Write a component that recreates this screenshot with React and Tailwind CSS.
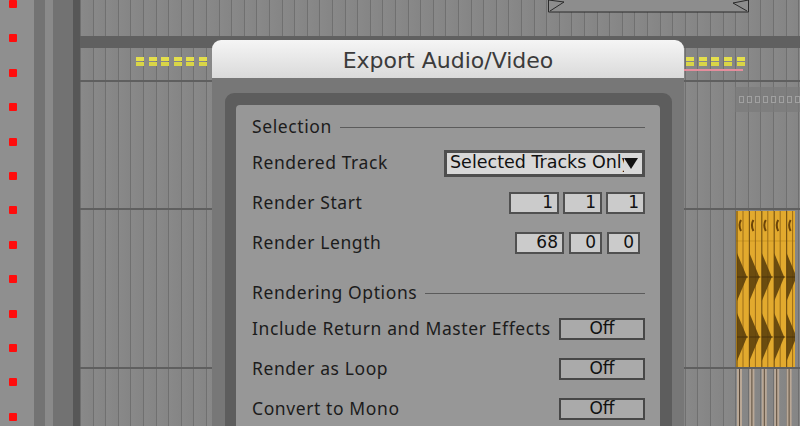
import React from 'react';

const stripes =
  'bg-[repeating-linear-gradient(90deg,#707070_0px,#707070_1px,#898989_1px,#858585_12.6px)]';

const labelFont = { fontFamily: '"Noto Sans", sans-serif' };
const boxFont = { fontFamily: '"DejaVu Sans", sans-serif' };

const RedDots = () => (
  <div className="w-[36px] h-full bg-[#8f8f8f] flex flex-col gap-[26.4px] pl-[9px]">
    {Array.from({ length: 13 }).map((_, i) => (
      <div key={i} className="w-[8px] h-[8px] shrink-0 rounded-[1px] bg-[#ff0d0d]" />
    ))}
  </div>
);

const Dash = () => (
  <div className="w-[8px] flex flex-col gap-[1px]">
    <div className="h-[4px] bg-[#e4df4c]" />
    <div className="h-[4px] bg-[#d9d547]" />
  </div>
);

const LoopBrace = () => (
  <svg width="202" height="13" viewBox="0 0 202 13" className="block">
    <rect x="0" y="0" width="201" height="12" fill="#8d8d8d" />
    <path d="M0.5 0 V12 H200.5 V0" fill="none" stroke="#2a2a2a" strokeWidth="1" />
    <path d="M0.5 0 L16 2 L2 11" fill="none" stroke="#2a2a2a" strokeWidth="1" />
    <path d="M200.5 0 L185 3 L199 11" fill="none" stroke="#2a2a2a" strokeWidth="1" />
  </svg>
);

const GoldClip = () => (
  <svg width="59" height="157" viewBox="0 0 59 157" className="block">
    <rect x="0" y="0" width="59" height="157" fill="#e2aa2e" />
    <line x1="0" y1="30" x2="59" y2="30" stroke="#c99521" strokeWidth="1" />
    {[0, 1, 2, 3, 4].map(i => {
      const x = i * 12.4;
      return (
        <g key={i}>
          <line x1={x + 1} y1="0" x2={x + 1} y2="157" stroke="#7a5512" strokeWidth="1.2" />
          <line x1={x + 7} y1="0" x2={x + 7} y2="157" stroke="#9c6d18" strokeWidth="1" />
          <path d={`M${x + 5} 9 Q${x + 2} 14 ${x + 5} 20`} fill="none" stroke="#6b4408" strokeWidth="2" />
          <path d={`M${x + 1} 42 L${x + 11} 66 L${x + 1} 90 Z`} fill="#5e410c" opacity="0.9" />
          <path d={`M${x + 1} 102 L${x + 11} 126 L${x + 1} 150 Z`} fill="#5e410c" opacity="0.9" />
          <line x1={x + 1} y1="66" x2={x + 12} y2="66" stroke="#4a320a" strokeWidth="1" />
          <line x1={x + 1} y1="126" x2={x + 12} y2="126" stroke="#4a320a" strokeWidth="1" />
        </g>
      );
    })}
  </svg>
);

const BeigeLines = () => (
  <svg width="59" height="57" viewBox="0 0 59 57" className="block">
    {[0, 1, 2, 3, 4].map(i => {
      const x = i * 12.4;
      return (
        <g key={i}>
          <rect x={x + 1} y="0" width="5" height="57" fill="#b9a897" />
          <line x1={x + 3.5} y1="0" x2={x + 3.5} y2="57" stroke="#5a4a3a" strokeWidth="1" />
        </g>
      );
    })}
  </svg>
);

const SectionHeader = ({ title }) => (
  <div className="flex items-center h-6 gap-[8px] mb-1">
    <span className="text-[17.5px] tracking-[0.6px] text-[#1c1c1c] leading-none" style={labelFont}>{title}</span>
    <div className="flex-1 h-px bg-[#5b5b5b]" />
  </div>
);

const Row = ({ label, children }) => (
  <div className="flex items-center justify-between h-10">
    <span className="text-[17.5px] tracking-[0.6px] text-[#1c1c1c] leading-none whitespace-nowrap" style={labelFont}>
      {label}
    </span>
    {children}
  </div>
);

const NumBox = ({ value, w }) => (
  <div
    className={`${w} h-[22px] border-2 border-[#505050] bg-[#cbcbcb] flex items-center justify-end pr-[4px] text-[17px] text-[#111]`}
    style={boxFont}
  >
    {value}
  </div>
);

const OffBox = () => (
  <div
    className="w-[86px] h-[22px] border-2 border-[#474747] bg-[#aaaaaa] flex items-center justify-center text-[17px] text-[#111]"
    style={boxFont}
  >
    Off
  </div>
);

const ExportDialog = () => (
  <div className="absolute left-[212px] top-[40px] w-[472px] bottom-0 flex flex-col">
    {/* title bar */}
    <div className="h-[38px] rounded-t-[9px] bg-[linear-gradient(180deg,#f5f5f5,#dadada)] flex items-center justify-center pt-[2px]">
      <span className="text-[22px] text-[#3b3b3b]" style={boxFont}>Export Audio/Video</span>
    </div>

    {/* body */}
    <div className="flex-1 bg-[#777777] pt-[15px] pl-[13px] pr-[12px] overflow-hidden">
      <div className="h-[360px] rounded-[9px] bg-[#5d5d5d] pt-[12px] pl-[11px] pr-[12px]">
        <div className="h-[360px] rounded-[4px] bg-[#979797] pl-[16px] pr-[15px] pt-[10px]">
          <SectionHeader title="Selection" />
          <Row label="Rendered Track">
            <div className="w-[201px] h-[27px] border-[3px] border-[#4e4e4e] bg-[#d8d8d8] flex items-center pl-[3px] pr-[4px]">
              <span className="flex-1 overflow-hidden whitespace-nowrap text-[17.5px] text-[#111] leading-none" style={boxFont}>
                Selected Tracks Only
              </span>
              <svg width="14" height="11" viewBox="0 0 14 11" className="shrink-0">
                <path d="M0 0 H14 L7 11 Z" fill="#111" />
              </svg>
            </div>
          </Row>
          <Row label="Render Start">
            <div className="flex gap-[4px]">
              <NumBox value="1" w="w-[50px]" />
              <NumBox value="1" w="w-[39px]" />
              <NumBox value="1" w="w-[39px]" />
            </div>
          </Row>
          <Row label="Render Length">
            <div className="flex gap-[5px] mr-[5px]">
              <NumBox value="68" w="w-[49px]" />
              <NumBox value="0" w="w-[33px]" />
              <NumBox value="0" w="w-[33px]" />
            </div>
          </Row>
          <div className="h-[18px]" />
          <SectionHeader title="Rendering Options" />
          <Row label="Include Return and Master Effects">
            <OffBox />
          </Row>
          <Row label="Render as Loop">
            <OffBox />
          </Row>
          <Row label="Convert to Mono">
            <OffBox />
          </Row>
        </div>
      </div>
    </div>
  </div>
);

export default function App() {
  const leftDashes = [0, 1, 2, 3, 4, 5];
  const rightDashes = [0, 1, 2, 3, 4];

  return (
    <div className="relative w-[800px] h-[426px] overflow-hidden flex bg-[#858585]">
      {/* left ruler and track headers */}
      <RedDots />
      <div className="w-[12px] h-full bg-[#737373]" />
      <div className="w-[8px] h-full bg-[#8a8a8a]" />
      <div className="w-[21px] h-full bg-[#727272]" />
      <div className="w-[8px] h-full bg-[#575757]" />

      {/* arrangement */}
      <div className="flex-1 h-full flex flex-col">
        <div className={`h-[36px] ${stripes} pl-[468px]`}>
          <LoopBrace />
        </div>
        <div className="h-[12px] bg-[#606060]" />
        <div className={`h-[32px] ${stripes} flex pt-[9px]`}>
          <div className="flex gap-[4.6px] pl-[56px]">
            {leftDashes.map(i => <Dash key={i} />)}
          </div>
          <div className="ml-[476px] flex flex-col gap-[3px]">
            <div className="flex gap-[4.7px] pl-[3px]">
              {rightDashes.map(i => <Dash key={i} />)}
            </div>
            <div className="h-[2px] w-[60px] bg-[#e58d9c]" />
          </div>
        </div>
        <div className="h-[2px] bg-[#5f5f5f]" />
        <div className={`h-[126px] ${stripes} pt-[5px] pl-[655px]`}>
          <div className="h-[25px] bg-[#7a7a7a]/70 flex items-center gap-[3px] pl-[4px]">
            {[0, 1, 2, 3, 4, 5, 6, 7].map(i => (
              <div key={i} className="w-[5px] h-[7px] border border-[#a0a0a0]" />
            ))}
          </div>
        </div>
        <div className="h-[2px] bg-[#5f5f5f]" />
        <div className={`h-[157px] ${stripes} pl-[656px] pt-[1px]`}>
          <GoldClip />
        </div>
        <div className="h-[2px] bg-[#5f5f5f]" />
        <div className={`flex-1 ${stripes} pl-[656px]`}>
          <BeigeLines />
        </div>
      </div>

      <ExportDialog />
    </div>
  );
}
